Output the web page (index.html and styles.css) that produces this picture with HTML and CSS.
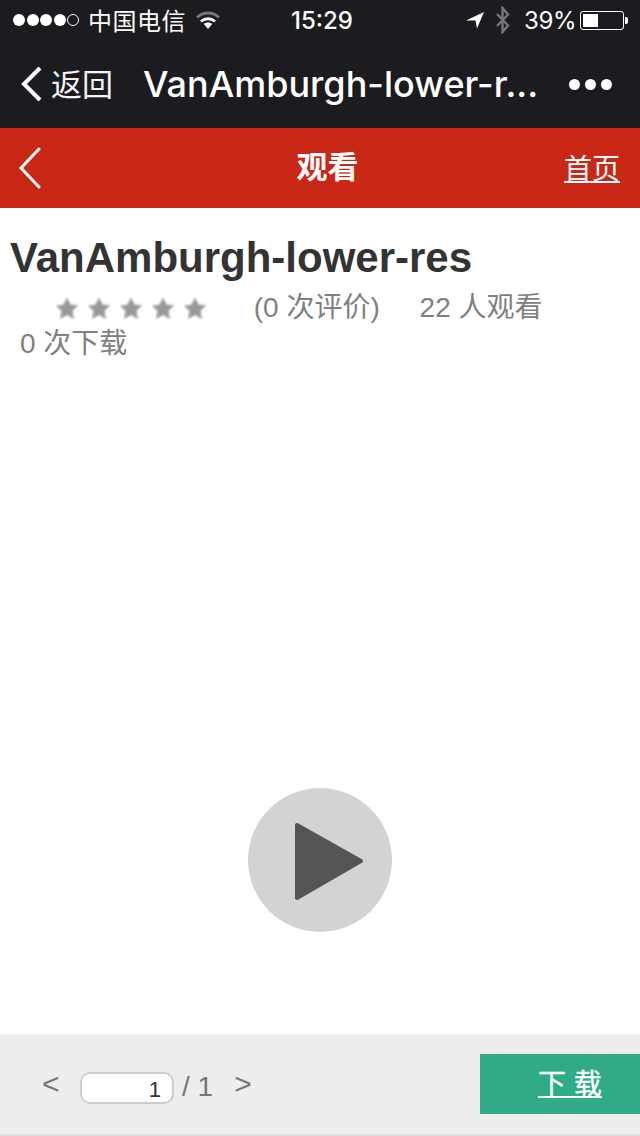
FILE: index.html
```html
<!DOCTYPE html>
<html lang="zh-CN">
<head>
  <meta charset="UTF-8" />
  <meta name="viewport" content="width=device-width, initial-scale=1.0" />
  <title>观看</title>
  <link rel="stylesheet" href="styles.css">
</head>
<body>
  <div class="page">
    <div class="statusbar">
      <div class="status-left">
        <span class="signal"><i></i><i></i><i></i><i></i><i></i></span>
        <span class="carrier">中国电信</span>
        <svg class="wifi" width="24" height="19" viewBox="0 0 24 19">
          <path d="M1 6.500C7.200 .5 16.800 .5 23 6.500" fill="none" stroke="#77777b" stroke-width="2.800"/>
          <path d="M5 10.500C9 6.800 15 6.800 19 10.500" fill="none" stroke="#fff" stroke-width="2.800"/>
          <path d="M7.800 13C10.200 11 13.800 11 16.200 13L12 18Z" fill="#fff"/>
        </svg>
      </div>
      <div class="status-time">15:29</div>
      <div class="status-right">
        <svg class="arrow" width="18" height="18" viewBox="0 0 18 18"><path d="M0 9.500L18 1L11 17.500L9.500 9.500Z" fill="#fff"/></svg>
        <svg class="bt" width="16" height="28" viewBox="0 0 16 28"><path d="M2 8L13 19.500L7.500 26V2L13 8.500L2 20" fill="none" stroke="#77777b" stroke-width="2.400"/></svg>
        <span class="percent">39%</span>
        <span class="battery"><span class="battery-fill"></span></span>
        <span class="battery-tip"></span>
      </div>
    </div>

    <div class="wx-nav">
      <svg class="wx-back" width="24" height="36" viewBox="0 0 24 36"><path d="M20 2L4 18L20 34" fill="none" stroke="#fff" stroke-width="4"/></svg>
      <span class="wx-back-text">返回</span>
      <span class="wx-title">VanAmburgh-lower-r...</span>
      <span class="wx-more"><i></i><i></i><i></i></span>
    </div>

    <div class="header">
      <svg class="header-back" width="24" height="42" viewBox="0 0 24 42"><path d="M21 2L3 21L21 40" fill="none" stroke="#fff" stroke-width="3" stroke-linecap="round"/></svg>
      <span class="header-title">观看</span>
      <a class="header-home" href="#">首页</a>
    </div>

    <div class="main">
      <h1 class="doc-title">VanAmburgh-lower-res</h1>
      <div class="doc-meta">
        <span class="stars">
          <svg class="star" viewBox="0 0 24 24"><path d="M12 1.500L15.400 8.500L23 9.500L17.500 15L19 23L12 19L5 23L6.500 15L1 9.500L8.600 8.500Z"/></svg>
          <svg class="star" viewBox="0 0 24 24"><path d="M12 1.500L15.400 8.500L23 9.500L17.500 15L19 23L12 19L5 23L6.500 15L1 9.500L8.600 8.500Z"/></svg>
          <svg class="star" viewBox="0 0 24 24"><path d="M12 1.500L15.400 8.500L23 9.500L17.500 15L19 23L12 19L5 23L6.500 15L1 9.500L8.600 8.500Z"/></svg>
          <svg class="star" viewBox="0 0 24 24"><path d="M12 1.500L15.400 8.500L23 9.500L17.500 15L19 23L12 19L5 23L6.500 15L1 9.500L8.600 8.500Z"/></svg>
          <svg class="star" viewBox="0 0 24 24"><path d="M12 1.500L15.400 8.500L23 9.500L17.500 15L19 23L12 19L5 23L6.500 15L1 9.500L8.600 8.500Z"/></svg>
        </span>
        <span class="rating">(0 次评价)</span>
        <span class="views">22 人观看</span>
        <div class="downloads">0 次下载</div>
      </div>
      <div class="play">
        <svg width="70" height="80" viewBox="0 0 70 80"><path d="M3 3L67 39L3 76Z" fill="#555" stroke="#555" stroke-width="4" stroke-linejoin="round"/></svg>
      </div>
    </div>

    <div class="footer">
      <div class="pager">
        <span class="pager-arrow">&lt;</span>
        <span class="pager-input">1</span>
        <span class="pager-total">/ 1</span>
        <span class="pager-arrow next">&gt;</span>
      </div>
      <a class="download" href="#">下 载</a>
    </div>
  </div>
</body>
</html>
```

FILE: styles.css
```css
* {
  box-sizing: border-box;
}
body {
  margin: 0;
  background-color: #fff;
  font-family: "Liberation Sans", "Noto Sans CJK SC", sans-serif;
}
.page {
  display: flex;
  flex-direction: column;
  width: 640px;
  height: 1136px;
  overflow: hidden;
}

/* status bar */
.statusbar {
  display: flex;
  align-items: center;
  height: 40px;
  flex: none;
  background-color: #1b1b20;
  color: #fff;
  font-family: Inter, "Noto Sans CJK SC", sans-serif;
  font-size: 24px;
}
.status-left {
  display: flex;
  align-items: center;
  width: 291px;
  padding-left: 13px;
}
.signal {
  display: flex;
  gap: 1.5px;
  margin-right: 9px;
}
.signal i {
  width: 12px;
  height: 12px;
  border-radius: 50%;
  background-color: #fff;
}
.signal i:last-child {
  background: none;
  border: 1px solid #fff;
}
.carrier {
  margin-top: -2px;
  letter-spacing: .5px;
}
.wifi {
  margin-left: 10px;
}
.status-time {
  width: 130px;
  font-size: 24px;
  font-weight: 500;
}
.status-right {
  display: flex;
  align-items: center;
  flex: 1;
  padding-left: 45px;
}
.arrow {
  margin-right: 11px;
}
.bt {
  margin-right: 13px;
}
.percent {
  margin-right: 4px;
  letter-spacing: -.3px;
}
.battery {
  display: block;
  width: 44px;
  height: 19px;
  padding: 2px;
  border: 1px solid #fff;
  border-radius: 3px;
}
.battery-fill {
  display: block;
  width: 15px;
  height: 13px;
  background-color: #fff;
}
.battery-tip {
  width: 3px;
  height: 7px;
  margin-left: 1px;
  background-color: #fff;
  border-radius: 0 2px 2px 0;
}

/* wechat bar */
.wx-nav {
  display: flex;
  align-items: center;
  height: 88px;
  flex: none;
  padding-left: 20px;
  background-color: #1b1b20;
  color: #fff;
}
.wx-back {
  margin-right: 7px;
}
.wx-back-text {
  width: 92px;
  margin-top: -3px;
  font-size: 31px;
  color: #f4f4f4;
}
.wx-title {
  width: 426px;
  font-family: Inter, "Liberation Sans", sans-serif;
  font-size: 36px;
  font-weight: 500;
  white-space: nowrap;
}
.wx-more {
  display: flex;
  gap: 5px;
}
.wx-more i {
  width: 11px;
  height: 11px;
  border-radius: 50%;
  background-color: #fff;
}

/* red header */
.header {
  display: flex;
  align-items: center;
  justify-content: space-between;
  height: 80px;
  flex: none;
  padding: 0 20px 0 18px;
  background-color: #c92816;
  color: #fff;
}
.header-title {
  margin-left: 49px;
  margin-top: -7px;
  font-size: 31px;
  font-weight: bold;
}
.header-home {
  margin-top: -3px;
  font-size: 28px;
  color: #fff;
}

/* content */
.main {
  flex: 1;
  padding: 26px 0 0 10px;
}
.doc-title {
  margin: 0;
  font-size: 42px;
  line-height: 48px;
  font-weight: bold;
  color: #333;
}
.doc-meta {
  margin-top: 8px;
  padding: 0 10px;
  font-size: 28px;
  line-height: 36px;
  color: #808080;
}
.stars {
  display: inline-flex;
  gap: 8px;
  margin-left: 35px;
  margin-right: 39px;
  vertical-align: -3px;
}
.star {
  width: 24px;
  height: 24px;
  fill: #999;
  filter: blur(.8px);
}
.rating {
  margin-right: 32px;
}
.play {
  display: flex;
  align-items: center;
  justify-content: center;
  width: 144px;
  height: 144px;
  margin: 426px 0 0 238px;
  padding: 3px 0 0 18px;
  border-radius: 50%;
  background-color: #d3d3d3;
}

/* footer */
.footer {
  display: flex;
  align-items: center;
  justify-content: space-between;
  height: 102px;
  flex: none;
  padding-bottom: 1px;
  background-color: #ededed;
  border-top: 1px solid #f2f2f2;
  border-bottom: 2px solid #e0e0e0;
}
.pager {
  display: flex;
  align-items: center;
  margin-top: 7px;
  padding-left: 42px;
  color: #777;
  font-size: 28px;
}
.pager-arrow {
  width: 38px;
  margin-top: -7px;
  font-size: 30px;
}
.pager-arrow.next {
  margin-left: 21px;
}
.pager-input {
  width: 94px;
  height: 32px;
  padding-right: 11px;
  border: 2px solid #ccc;
  border-radius: 10px;
  background-color: #fff;
  color: #333;
  font-size: 22px;
  line-height: 32px;
  text-align: right;
}
.pager-total {
  margin-left: 8px;
  margin-top: -2px;
}
.download {
  display: block;
  width: 160px;
  height: 60px;
  padding-left: 58px;
  background-color: #30ab87;
  color: #fff;
  font-size: 28px;
  line-height: 62px;
  -webkit-text-stroke: .3px #fff;
}
```
